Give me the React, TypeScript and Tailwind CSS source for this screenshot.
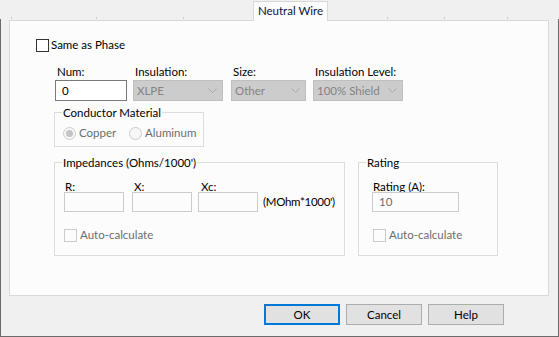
import React from "react";

const Chevron = () => (
  <svg width="9" height="5" viewBox="0 0 9 5" className="shrink-0">
    <path d="M0.5 0.5 L4.5 4.5 L8.5 0.5" fill="none" stroke="#A8A8A8" strokeWidth="1" />
  </svg>
);

function Field({ label, width, children }: { label: string; width: string; children: React.ReactNode }) {
  return (
    <div className={`flex flex-col ${width}`}>
      <div className="h-[14px] leading-[14px] pl-[2px] text-black">{label}</div>
      {children}
    </div>
  );
}

function DisabledSelect({ value }: { value: string }) {
  return (
    <div className="mt-[1px] h-[21px] border border-[#BFBFBF] bg-[#CCCCCC] flex items-center justify-between pl-[3px] pr-[5px] text-[#838383]">
      <span className="leading-[14px]">{value}</span>
      <Chevron />
    </div>
  );
}

function GroupBox({ title, className, children }: { title: string; className: string; children?: React.ReactNode }) {
  return (
    <div className={`relative border border-[#DCDCDC] ${className}`}>
      <span className="absolute -top-[7px] left-[7px] px-[1px] bg-[#FCFCFD] leading-[14px] text-black">{title}</span>
      {children}
    </div>
  );
}

function DisabledCheck({ label }: { label: string }) {
  return (
    <div className="flex items-center gap-[3px]">
      <div className="w-[13px] h-[13px] border border-[#CCCCCC] bg-[#FCFCFD]" />
      <span className="leading-[14px] text-[#6D6D6D]">{label}</span>
    </div>
  );
}

function Radio({ label, checked }: { label: string; checked?: boolean }) {
  return (
    <div className="flex items-center gap-[3px]">
      <div className="w-[13px] h-[13px] rounded-full border border-[#CCCCCC] bg-[#F7F7F7] flex items-center justify-center">
        {checked && <div className="w-[7px] h-[7px] rounded-full bg-[#C4C4C4]" />}
      </div>
      <span className="leading-[14px] text-[#6D6D6D]">{label}</span>
    </div>
  );
}

const ticks = ["left-[11px]", "left-[96px]", "left-[183px]", "left-[387px]", "left-[444px]", "left-[507px]"];

export default function App() {
  return (
    <div className="w-[559px] h-[337px] bg-[#F0F0F0] flex flex-col text-[11.5px] font-['Lato',sans-serif] overflow-hidden">
      {/* tab strip */}
      <div className="relative h-[19px] pl-[253px] pt-[1px] flex shrink-0">
        {ticks.map((t) => (
          <div key={t} className={`absolute top-[17px] w-px h-[2px] bg-[#C8C8C8] ${t}`} />
        ))}
        <div className="relative z-10 w-[75px] h-[20px] bg-[#FCFCFD] border-l border-t border-r border-[#D9D9D9] flex justify-center pt-[2px]">
          <span className="leading-[14px] text-[#10103A]">Neutral Wire</span>
        </div>
      </div>

      {/* dialog body */}
      <div className="flex-1 flex flex-col border-l border-r border-b border-[#6B6B6B]">
        <div className="mt-[1px] ml-[8px] w-[540px] h-[276px] border border-[#D9D9D9] bg-[#FCFCFD] flex flex-col">
          <div className="mt-[17px] ml-[26px] flex items-center gap-[2px]">
            <div className="w-[13px] h-[13px] border border-[#333333] bg-white" />
            <span className="leading-[14px] text-black">Same as Phase</span>
          </div>

          <div className="mt-[13px] ml-[45px] flex">
            <Field label="Num:" width="w-[72px]">
              <div className="mt-[1px] h-[21px] border border-[#7A7A7A] bg-white flex items-center pl-[6px] text-black">
                <span className="leading-[14px]">0</span>
              </div>
            </Field>
            <div className="w-[6px]" />
            <Field label="Insulation:" width="w-[90px]">
              <DisabledSelect value="XLPE" />
            </Field>
            <div className="w-[8px]" />
            <Field label="Size:" width="w-[75px]">
              <DisabledSelect value="Other" />
            </Field>
            <div className="w-[7px]" />
            <Field label="Insulation Level:" width="w-[90px]">
              <DisabledSelect value="100% Shield" />
            </Field>
          </div>

          <GroupBox title="Conductor Material" className="mt-[11px] ml-[44px] w-[150px] h-[35px] shrink-0">
            <div className="mt-[13px] ml-[8px] flex">
              <div className="w-[66px]">
                <Radio label="Copper" checked />
              </div>
              <Radio label="Aluminum" />
            </div>
          </GroupBox>

          <div className="mt-[15px] ml-[44px] flex gap-[13px]">
            <GroupBox title="Impedances (Ohms/1000')" className="w-[291px] h-[94px]">
              <div className="mt-[17px] ml-[9px] flex items-end">
                <div className="flex flex-col w-[60px]">
                  <div className="h-[14px] leading-[14px] pl-[1px] text-black">R:</div>
                  <div className="-mt-[2px] h-[20px] border border-[#CCCCCC] bg-[#FCFCFD]" />
                </div>
                <div className="w-[8px]" />
                <div className="flex flex-col w-[60px]">
                  <div className="h-[14px] leading-[14px] pl-[2px] text-black">X:</div>
                  <div className="-mt-[2px] h-[20px] border border-[#CCCCCC] bg-[#FCFCFD]" />
                </div>
                <div className="w-[6px]" />
                <div className="flex flex-col w-[60px]">
                  <div className="h-[14px] leading-[14px] pl-[3px] text-black">Xc:</div>
                  <div className="-mt-[2px] h-[20px] border border-[#CCCCCC] bg-[#FCFCFD]" />
                </div>
                <div className="ml-[5px] h-[20px] flex items-center">
                  <span className="leading-[14px] text-black tracking-[-0.3px]">(MOhm*1000')</span>
                </div>
              </div>
              <div className="mt-[16px] ml-[9px]">
                <DisabledCheck label="Auto-calculate" />
              </div>
            </GroupBox>

            <GroupBox title="Rating" className="w-[140px] h-[94px]">
              <div className="mt-[17px] ml-[13px] flex flex-col w-[87px]">
                <div className="h-[14px] leading-[14px] pl-[1px] text-black">Rating (A):</div>
                <div className="-mt-[2px] h-[20px] border border-[#CCCCCC] bg-[#FCFCFD] flex items-center pl-[6px]">
                  <span className="leading-[14px] text-[#6D6D6D]">10</span>
                </div>
              </div>
              <div className="mt-[16px] ml-[14px]">
                <DisabledCheck label="Auto-calculate" />
              </div>
            </GroupBox>
          </div>
        </div>

        <div className="mt-[8px] pl-[263px] flex gap-[6px]">
          <button className="w-[76px] h-[21px] border-2 border-[#0078D7] bg-[#E1E1E1] text-black leading-[14px]">OK</button>
          <button className="w-[76px] h-[21px] border border-[#ADADAD] bg-[#E1E1E1] text-black leading-[14px]">Cancel</button>
          <button className="w-[76px] h-[21px] border border-[#ADADAD] bg-[#E1E1E1] text-black leading-[14px]">Help</button>
        </div>
      </div>
    </div>
  );
}
